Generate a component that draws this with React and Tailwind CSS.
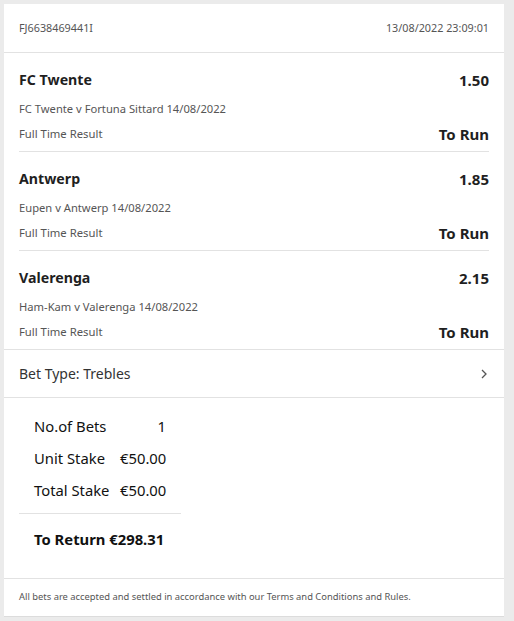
const selections = [
  { team: 'FC Twente', odds: '1.50', match: 'FC Twente v Fortuna Sittard 14/08/2022' },
  { team: 'Antwerp', odds: '1.85', match: 'Eupen v Antwerp 14/08/2022' },
  { team: 'Valerenga', odds: '2.15', match: 'Ham-Kam v Valerenga 14/08/2022' },
];

const font = { fontFamily: '"Noto Sans", "Open Sans", sans-serif' };

export default function App() {
  return (
    <div className="min-h-[621px] bg-[#ebebeb] pt-1 pl-1 pr-[10px] pb-[5px]" style={font}>
      <div className="bg-white shadow-[0_1px_0_#dcdcdc]">
        {/* header */}
        <div className="h-[49px] flex items-center justify-between px-[15px] border-b border-[#e2e2e2] text-[10.8px] text-[#555]">
          <span>FJ6638469441I</span>
          <span>13/08/2022 23:09:01</span>
        </div>

        {/* selections */}
        <div className="px-[15px] border-b border-[#e2e2e2]">
          {selections.map((s, i) => (
            <div
              key={s.team}
              className={`pt-[17px] ${i < selections.length - 1 ? 'h-[99px] border-b border-[#e2e2e2]' : 'h-[98px]'}`}
            >
              <div className="flex justify-between items-center h-[20px] font-bold text-[#1f1f1f]">
                <span className="text-[14.2px]">{s.team}</span>
                <span className="text-[15px]">{s.odds}</span>
              </div>
              <div className="mt-[11px] h-[16px] flex items-center text-[11.2px] text-[#555]">{s.match}</div>
              <div className="mt-[7px] h-[20px] flex justify-between items-center">
                <span className="text-[11.3px] text-[#555] pt-[1px]">Full Time Result</span>
                <span className="text-[15px] font-bold text-[#1f1f1f]">To Run</span>
              </div>
            </div>
          ))}
        </div>

        {/* bet type */}
        <div className="h-[48px] flex items-center justify-between pl-[15px] pr-[17px] border-b border-[#e2e2e2] text-[14px] text-[#333]">
          <span>Bet Type: Trebles</span>
          <svg width="6" height="10" viewBox="0 0 6 10" fill="none">
            <polyline points="1,1 5,5 1,9" stroke="#555" strokeWidth="1.3" />
          </svg>
        </div>

        {/* summary */}
        <div className="px-[15px] pt-[13px] border-b border-[#e2e2e2]">
          <div className="w-[162px]">
            <div className="pl-[15px] text-[14.8px] text-[#111]">
              <div className="h-[31px] flex items-center">
                <span className="w-[86px]">No.of Bets</span>
                <span className="w-[46px] text-right">1</span>
              </div>
              <div className="h-[32px] flex items-center">
                <span className="w-[86px]">Unit Stake</span>
                <span className="w-[46px] text-right">€50.00</span>
              </div>
              <div className="h-[32px] flex items-center">
                <span className="w-[86px]">Total Stake</span>
                <span className="w-[46px] text-right">€50.00</span>
              </div>
            </div>
            <div className="mt-[7px] border-b border-[#e2e2e2]" />
            <div className="h-[50px] flex items-center pl-[15px] text-[14.8px] font-bold text-[#111]">
              To Return €298.31
            </div>
          </div>
          <div className="h-[14px]" />
        </div>

        {/* footer */}
        <div className="h-[37px] flex items-center px-[15px] text-[9.4px] text-[#555]">
          All bets are accepted and settled in accordance with our Terms and Conditions and Rules.
        </div>
      </div>
    </div>
  );
}
